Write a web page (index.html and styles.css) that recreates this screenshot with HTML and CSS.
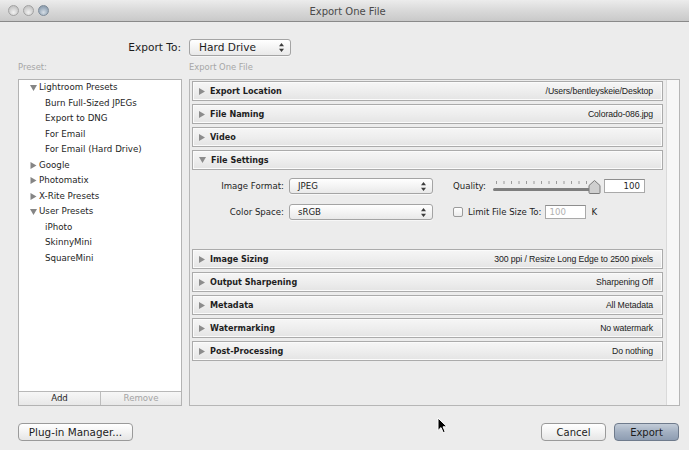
FILE: index.html
```html
<!DOCTYPE html>
<html lang="en">
<head>
<meta charset="utf-8">
<title>Export One File</title>
<link rel="stylesheet" href="styles.css">
</head>
<body>
<div class="window">
  <header class="titlebar">
    <div class="lights">
      <span class="light"></span>
      <span class="light"></span>
      <span class="light zoom"></span>
    </div>
    <div class="title">Export One File</div>
    <div></div>
  </header>

  <main class="content">
    <div class="export-to">
      <label class="export-label">Export To:</label>
      <div class="popup popup-large">
        <span>Hard Drive</span>
        <svg class="updown" width="5" height="9" viewBox="0 0 5 9"><path d="M2.5 0L5 3.2H0z M0 5.8H5L2.5 9z"/></svg>
      </div>
    </div>

    <div class="columns">
      <section class="preset-col">
        <div class="caption">Preset:</div>
        <div class="preset-box">
          <ul class="tree">
            <li class="folder"><svg class="tri" width="7" height="6" viewBox="0 0 7 6"><path d="M0 0H7L3.5 6z"/></svg>Lightroom Presets</li>
            <li class="leaf">Burn Full-Sized JPEGs</li>
            <li class="leaf">Export to DNG</li>
            <li class="leaf">For Email</li>
            <li class="leaf">For Email (Hard Drive)</li>
            <li class="folder"><svg class="tri" width="7" height="7" viewBox="0 0 7 7"><path d="M0.5 0L6.5 3.5L0.5 7z"/></svg>Google</li>
            <li class="folder"><svg class="tri" width="7" height="7" viewBox="0 0 7 7"><path d="M0.5 0L6.5 3.5L0.5 7z"/></svg>Photomatix</li>
            <li class="folder"><svg class="tri" width="7" height="7" viewBox="0 0 7 7"><path d="M0.5 0L6.5 3.5L0.5 7z"/></svg>X-Rite Presets</li>
            <li class="folder"><svg class="tri" width="7" height="6" viewBox="0 0 7 6"><path d="M0 0H7L3.5 6z"/></svg>User Presets</li>
            <li class="leaf">iPhoto</li>
            <li class="leaf">SkinnyMini</li>
            <li class="leaf">SquareMini</li>
          </ul>
          <div class="bar">
            <button class="bar-btn">Add</button>
            <button class="bar-btn disabled">Remove</button>
          </div>
        </div>
      </section>

      <section class="main-col">
        <div class="caption">Export One File</div>
        <div class="sections-box">
          <div class="sections">
            <div class="hdr"><svg class="tri" width="6" height="7" viewBox="0 0 6 7"><path d="M0 0L6 3.5L0 7z"/></svg><span class="hdr-title">Export Location</span><span class="hdr-sum">/Users/bentleyskeie/Desktop</span></div>
            <div class="hdr"><svg class="tri" width="6" height="7" viewBox="0 0 6 7"><path d="M0 0L6 3.5L0 7z"/></svg><span class="hdr-title">File Naming</span><span class="hdr-sum">Colorado-086.jpg</span></div>
            <div class="hdr"><svg class="tri" width="6" height="7" viewBox="0 0 6 7"><path d="M0 0L6 3.5L0 7z"/></svg><span class="hdr-title">Video</span><span class="hdr-sum"></span></div>
            <div class="hdr"><svg class="tri" width="7" height="6" viewBox="0 0 7 6"><path d="M0 0H7L3.5 6z"/></svg><span class="hdr-title">File Settings</span><span class="hdr-sum"></span></div>
            <div class="fs-body">
              <div class="fs-row">
                <span class="fs-label">Image Format:</span>
                <div class="popup popup-wide"><span>JPEG</span><svg class="updown" width="5" height="9" viewBox="0 0 5 9"><path d="M2.5 0L5 3.2H0z M0 5.8H5L2.5 9z"/></svg></div>
                <div class="fs-right">
                  <span class="plain">Quality:</span>
                  <svg class="slider" width="108" height="16" viewBox="0 0 108 16">
                    <g class="ticks">
                      <rect x="3" y="3" width="1" height="3"/><rect x="10.5" y="3" width="1" height="3"/><rect x="18" y="3" width="1" height="3"/><rect x="25.5" y="3" width="1" height="3"/><rect x="33" y="3" width="1" height="3"/><rect x="40.5" y="3" width="1" height="3"/><rect x="48" y="3" width="1" height="3"/><rect x="55.5" y="3" width="1" height="3"/><rect x="63" y="3" width="1" height="3"/><rect x="70.5" y="3" width="1" height="3"/><rect x="78" y="3" width="1" height="3"/><rect x="85.5" y="3" width="1" height="3"/><rect x="93" y="3" width="1" height="3"/>
                    </g>
                    <rect class="track" x="0" y="10" width="102" height="3" rx="1.5"/>
                    <path class="thumb" d="M101.5 2.5L107 7.5V14.5Q107 15.5 106 15.5H97Q96 15.5 96 14.5V7.5Z"/>
                  </svg>
                  <div class="field field-quality">100</div>
                </div>
              </div>
              <div class="fs-row">
                <span class="fs-label">Color Space:</span>
                <div class="popup popup-wide"><span>sRGB</span><svg class="updown" width="5" height="9" viewBox="0 0 5 9"><path d="M2.5 0L5 3.2H0z M0 5.8H5L2.5 9z"/></svg></div>
                <div class="fs-right">
                  <span class="checkbox"></span>
                  <span class="plain limit">Limit File Size To:</span>
                  <div class="field field-limit">100</div>
                  <span class="plain unit">K</span>
                </div>
              </div>
            </div>
            <div class="hdr"><svg class="tri" width="6" height="7" viewBox="0 0 6 7"><path d="M0 0L6 3.5L0 7z"/></svg><span class="hdr-title">Image Sizing</span><span class="hdr-sum">300 ppi / Resize Long Edge to 2500 pixels</span></div>
            <div class="hdr"><svg class="tri" width="6" height="7" viewBox="0 0 6 7"><path d="M0 0L6 3.5L0 7z"/></svg><span class="hdr-title">Output Sharpening</span><span class="hdr-sum">Sharpening Off</span></div>
            <div class="hdr"><svg class="tri" width="6" height="7" viewBox="0 0 6 7"><path d="M0 0L6 3.5L0 7z"/></svg><span class="hdr-title">Metadata</span><span class="hdr-sum">All Metadata</span></div>
            <div class="hdr"><svg class="tri" width="6" height="7" viewBox="0 0 6 7"><path d="M0 0L6 3.5L0 7z"/></svg><span class="hdr-title">Watermarking</span><span class="hdr-sum">No watermark</span></div>
            <div class="hdr"><svg class="tri" width="6" height="7" viewBox="0 0 6 7"><path d="M0 0L6 3.5L0 7z"/></svg><span class="hdr-title">Post-Processing</span><span class="hdr-sum">Do nothing</span></div>
          </div>
          <div class="scrollbar"></div>
        </div>
      </section>
    </div>

    <footer class="footer">
      <button class="btn btn-plugin">Plug-in Manager...</button>
      <div class="footer-right">
        <button class="btn btn-cancel">Cancel</button>
        <button class="btn btn-default">Export</button>
      </div>
    </footer>
  </main>

  <svg class="cursor" width="11" height="17" viewBox="0 0 11 17"><path d="M1 1V13.5L4 10.6L6.2 15.6L8.2 14.7L6 9.8H10Z"/></svg>
</div>
</body>
</html>
```

FILE: styles.css
```css
html, body {
  margin: 0;
  padding: 0;
}

body {
  width: 689px;
  height: 450px;
  overflow: hidden;
  background: #ececec;
  font-family: "DejaVu Sans", "Noto Sans", sans-serif;
  color: #222;
}

.window {
  position: relative;
  height: 450px;
  display: flex;
  flex-direction: column;
}

/* ---------- title bar ---------- */
.titlebar {
  flex: none;
  height: 22px;
  box-sizing: border-box;
  border-bottom: 1px solid #8a8a8a;
  background: linear-gradient(#ececec, #d9d9d9 50%, #c9c9c9);
  display: grid;
  grid-template-columns: 1fr auto 1fr;
  align-items: center;
}

.lights {
  display: flex;
  gap: 4px;
  padding-left: 8px;
}

.light {
  width: 11px;
  height: 11px;
  border-radius: 50%;
  box-sizing: border-box;
  border: 1px solid #a2a2a2;
  background: radial-gradient(circle at 50% 70%, #f1f1f1 0%, #d0d0d0 55%, #b8b8b8 100%);
}

.light.zoom {
  border-color: #7d8b99;
  background: radial-gradient(circle at 50% 70%, #d5dde5 0%, #9fafbf 55%, #7e8fa0 100%);
}

.title {
  font-size: 10px;
  color: #4a4a4a;
  padding-top: 1px;
  padding-left: 6px;
}

/* ---------- content ---------- */
.content {
  flex: 1;
  display: flex;
  flex-direction: column;
  padding: 16px 9px 0 18px;
}

.export-to {
  display: grid;
  grid-template-columns: 163px 102px;
  column-gap: 8px;
  align-items: center;
  height: 18px;
}

.export-label {
  text-align: right;
  font-size: 10.6px;
  color: #1c1c1c;
}

.popup {
  box-sizing: border-box;
  height: 16px;
  border: 1px solid #a4a4a4;
  border-radius: 3px;
  background: linear-gradient(#ffffff, #f4f4f4 50%, #e9e9e9);
  box-shadow: 0 1px 0 rgba(255, 255, 255, 0.6);
  display: flex;
  align-items: center;
  justify-content: space-between;
  padding: 0 6px 0 8px;
  font-size: 8.6px;
  color: #1c1c1c;
}

.popup-large {
  height: 17px;
  font-size: 10.6px;
  padding-left: 9px;
}

.updown {
  fill: #3c3c3c;
}

.columns {
  display: grid;
  grid-template-columns: 164px 491px;
  column-gap: 7px;
  margin-top: 5px;
}

.caption {
  height: 12px;
  line-height: 12px;
  font-size: 8.4px;
  color: #a6a6a6;
  margin-bottom: 6px;
}

/* ---------- preset list ---------- */
.preset-box {
  box-sizing: border-box;
  height: 327px;
  border: 1px solid #b3b3b3;
  background: #fff;
  display: flex;
  flex-direction: column;
}

.tree {
  flex: 1;
  list-style: none;
  margin: 0;
  padding: 0;
  font-size: 8.7px;
  color: #1e1e1e;
}

.tree li {
  height: 15.5px;
  line-height: 15.5px;
  white-space: nowrap;
}

.tree .folder {
  display: flex;
  align-items: center;
  padding-left: 11px;
}

.tree .folder .tri {
  fill: #858585;
  margin-right: 2px;
}

.tree .leaf {
  padding-left: 26px;
}

.bar {
  height: 14px;
  box-sizing: border-box;
  border-top: 1px solid #b8b8b8;
  display: grid;
  grid-template-columns: 1fr 1fr;
  background: linear-gradient(#f7f7f7, #e8e8e8);
}

.bar-btn {
  border: 0;
  margin: 0;
  padding: 0;
  background: transparent;
  font-family: inherit;
  font-size: 8.6px;
  color: #1e1e1e;
  line-height: 13px;
}

.bar-btn + .bar-btn {
  border-left: 1px solid #bdbdbd;
}

.bar-btn.disabled {
  color: #a4a4a4;
}

/* ---------- export sections ---------- */
.sections-box {
  box-sizing: border-box;
  height: 327px;
  border: 1px solid #b6b6b6;
  display: flex;
}

.sections {
  flex: 1;
  padding: 1px 3px 0 2px;
}

.scrollbar {
  width: 12px;
  border-left: 1px solid #dadada;
  background: #f7f7f7;
}

.hdr {
  box-sizing: border-box;
  height: 20px;
  margin-bottom: 3px;
  border: 1px solid #ababab;
  box-shadow: inset 0 0 0 1px #fbfbfb;
  background: linear-gradient(#f6f6f6, #ededed 55%, #e4e4e4);
  display: flex;
  align-items: center;
  padding: 0 9px 0 6px;
}

.hdr .tri {
  flex: none;
  fill: #8c8c8c;
  margin-right: 5px;
}

.hdr-title {
  font-weight: bold;
  font-size: 8.1px;
  color: #1e1e1e;
}

.hdr-sum {
  margin-left: auto;
  font-family: "Liberation Sans", Arial, sans-serif;
  font-size: 8.7px;
  letter-spacing: -0.1px;
  color: #1a1a1a;
}

.fs-body {
  height: 73px;
  margin-bottom: 3px;
  box-sizing: border-box;
  padding-top: 5px;
  display: flex;
  flex-direction: column;
  gap: 10px;
}

.fs-row {
  display: flex;
  align-items: center;
  height: 16px;
}

.fs-label {
  width: 92px;
  text-align: right;
  margin-right: 5px;
  font-size: 8.6px;
  color: #1e1e1e;
}

.popup-wide {
  width: 144px;
}

.fs-right {
  display: flex;
  align-items: center;
  margin-left: 20px;
  font-size: 8.6px;
  color: #1e1e1e;
}

.slider {
  margin-left: 7px;
}

.ticks rect {
  fill: #9a9a9a;
}

.track {
  fill: #7e7e7e;
}

.thumb {
  fill: #cfcfcf;
  stroke: #7a7a7a;
  stroke-width: 1;
}

.field {
  box-sizing: border-box;
  height: 14px;
  width: 41px;
  border: 1px solid #a9a9a9;
  border-top-color: #8e8e8e;
  background: #fff;
  text-align: right;
  line-height: 12px;
  padding-right: 4px;
  font-size: 8.6px;
}

.field-quality {
  margin-left: 3px;
}

.field-limit {
  text-align: left;
  padding-left: 3px;
  color: #b0b0b0;
  margin-left: 4px;
}

.checkbox {
  width: 10px;
  height: 10px;
  box-sizing: border-box;
  border: 1px solid #9b9b9b;
  border-radius: 2px;
  background: linear-gradient(#ffffff, #ececec);
  margin-right: 5px;
}

.unit {
  margin-left: 5px;
}

/* ---------- footer ---------- */
.footer {
  display: flex;
  justify-content: space-between;
  align-items: center;
  padding-top: 17px;
  padding-right: 1px;
}

.footer-right {
  display: flex;
  gap: 8px;
}

.btn {
  box-sizing: border-box;
  height: 18px;
  border: 1px solid #9a9a9a;
  border-radius: 4px;
  background: linear-gradient(#ffffff, #f3f3f3 50%, #e6e6e6);
  font-family: inherit;
  font-size: 10px;
  color: #1c1c1c;
  padding: 0 8px;
  margin: 0;
}

.btn-plugin {
  width: 115px;
  font-size: 10.4px;
}

.btn-cancel {
  width: 65px;
}

.btn-default {
  width: 65px;
  border-color: #6f7b8c;
  background: linear-gradient(#c3ccd8, #a3b0c2 50%, #8e9db2);
}

.cursor {
  position: absolute;
  left: 437px;
  top: 417px;
  fill: #000;
  stroke: #fff;
  stroke-width: 1;
}
```
